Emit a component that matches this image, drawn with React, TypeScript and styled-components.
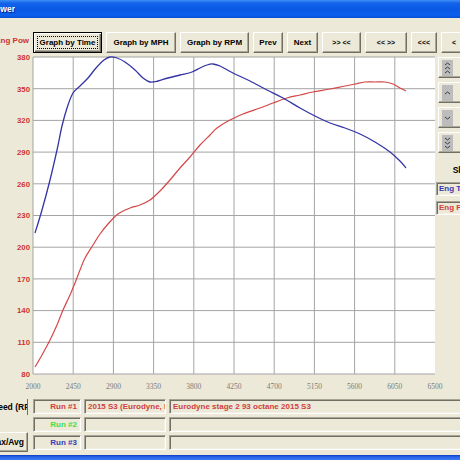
import React from 'react';
import styled, { createGlobalStyle, css } from 'styled-components';

const GlobalStyle = createGlobalStyle`
  html, body {
    margin: 0;
    padding: 0;
    background: #ece9d8;
  }
  body {
    width: 460px;
    height: 460px;
    overflow: hidden;
    font-family: "Liberation Sans", Arial, sans-serif;
  }
`;

const raised = css`
  border: 1px solid;
  border-color: #fff #716f64 #716f64 #fff;
  box-shadow: inset -1px -1px 0 #aca899;
`;

const sunken = css`
  border: 1px solid;
  border-color: #a7a597 #fff #fff #a7a597;
  box-shadow: inset 1px 1px 0 #716f64, inset -1px -1px 0 #f1efe2;
`;

const Window = styled.div`
  width: 460px;
  height: 460px;
  display: flex;
  flex-direction: column;
  overflow: hidden;
  background: #ece9d8;
`;

const TitleBar = styled.div`
  height: 18px;
  flex: none;
  display: flex;
  align-items: center;
  background: linear-gradient(180deg, #3d8df5 0%, #1262ea 18%, #0a58e4 55%, #0b5fee 85%, #0a4cd2 100%);
`;

const TitleClip = styled.div`
  width: 15px;
  overflow: hidden;
  display: flex;
  justify-content: flex-end;
`;

const TitleText = styled.span`
  color: #fff;
  font-size: 8.5px;
  font-weight: bold;
  white-space: nowrap;
  text-shadow: 1px 1px 0 #0a1e8c;
`;

const Toolbar = styled.div`
  margin-top: 14px;
  height: 21px;
  flex: none;
  display: flex;
  gap: 4px;
`;

const AxisTitle = styled.div`
  width: 29px;
  flex: none;
  overflow: hidden;
  display: flex;
  justify-content: flex-end;
  padding-top: 4px;
  color: #cc3333;
  font-size: 8px;
  font-weight: bold;
  white-space: nowrap;
`;

const Button = styled.button<{ $w: number; $small?: boolean; $focused?: boolean }>`
  position: relative;
  flex: none;
  width: ${(p) => p.$w}px;
  height: 21px;
  padding: 0;
  background: #ece9d8;
  color: #000;
  font-family: "Liberation Sans", Arial, sans-serif;
  font-size: ${(p) => (p.$small ? 7 : 8)}px;
  font-weight: bold;
  white-space: nowrap;
  ${raised}
  ${(p) =>
    p.$focused &&
    css`
      border: 1px solid #000;
      box-shadow: inset 1px 1px 0 #fff, inset -1px -1px 0 #716f64, inset -2px -2px 0 #aca899;
      &::after {
        content: '';
        position: absolute;
        inset: 3px;
        border: 1px dotted #000;
      }
    `}
`;

const Main = styled.div`
  height: 342px;
  flex: none;
  display: flex;
`;

const ChartSvg = styled.svg`
  width: 436px;
  height: 342px;
  flex: none;
  display: block;
  overflow: visible;
`;

const SideColumn = styled.div`
  width: 70px;
  flex: none;
  display: flex;
  flex-direction: column;
  padding-top: 4px;
`;

const ScrollButton = styled.div`
  width: 24px;
  height: 21px;
  margin: 0 0 4px 2px;
  box-sizing: border-box;
  display: flex;
  align-items: center;
  padding-left: 3px;
  background: #ece9d8;
  ${raised}
`;

const ShowLabel = styled.div`
  width: 56px;
  margin-top: 5px;
  height: 16px;
  line-height: 16px;
  text-align: center;
  font-size: 8.5px;
  font-weight: bold;
  color: #000;
`;

const LegendBox = styled.div<{ $color: string; $gap: number }>`
  width: 60px;
  height: 14px;
  margin-top: ${(p) => p.$gap}px;
  box-sizing: border-box;
  padding-left: 2px;
  line-height: 12px;
  font-size: 8px;
  font-weight: bold;
  white-space: nowrap;
  color: ${(p) => p.$color};
  ${sunken}
`;

const BottomPanel = styled.div`
  height: 60px;
  flex: none;
  box-sizing: border-box;
  padding: 4px 0 3px;
  display: flex;
`;

const LeftColumn = styled.div`
  width: 28px;
  flex: none;
  margin-right: 5px;
  display: flex;
  flex-direction: column;
  justify-content: space-between;
`;

const SpeedBox = styled.div`
  height: 16px;
  overflow: hidden;
  display: flex;
  justify-content: center;
  align-items: center;
  border-right: 1px solid #716f64;
  box-sizing: border-box;
  font-size: 8.5px;
  font-weight: bold;
  white-space: nowrap;
`;

const AvgButton = styled.div`
  height: 20px;
  overflow: hidden;
  display: flex;
  justify-content: flex-end;
  align-items: center;
  padding-right: 3px;
  box-sizing: border-box;
  font-size: 8.5px;
  font-weight: bold;
  white-space: nowrap;
  border-top: 1px solid #fff;
  border-right: 1px solid #716f64;
  border-bottom: 1px solid #716f64;
  box-shadow: inset -1px -1px 0 #aca899;
`;

const RunsGrid = styled.div`
  flex: 1;
  display: grid;
  grid-template-columns: 48px 82px 300px;
  grid-auto-rows: 15px;
  column-gap: 3px;
  row-gap: 3px;
`;

const Cell = styled.div<{ $color?: string; $right?: boolean }>`
  box-sizing: border-box;
  overflow: hidden;
  white-space: nowrap;
  padding: 0 3px;
  line-height: 13px;
  font-size: 8px;
  font-weight: bold;
  color: ${(p) => p.$color || '#000'};
  text-align: ${(p) => (p.$right ? 'right' : 'left')};
  ${sunken}
`;

const Taskbar = styled.div`
  height: 5px;
  flex: none;
  background: linear-gradient(180deg, #0a3ac4 0%, #2a66e8 40%, #3a7af2 100%);
`;

// chart geometry (page coordinates)
const X0 = 33;
const X1 = 435;
const Y0 = 57;
const Y1 = 374;

const torque: [number, number][] = [
  [35, 233], [42, 210], [50, 180], [57, 150], [62, 126], [67, 108], [73, 93], [80, 86],
  [88, 78], [96, 68], [104, 60], [110, 57], [117, 58], [125, 62], [135, 70], [143, 78],
  [150, 82], [158, 81], [168, 78], [180, 75], [192, 72], [200, 68], [207, 65], [213, 64],
  [220, 66], [233, 73], [250, 81], [267, 90], [283, 98], [300, 108], [315, 116], [330, 123],
  [345, 128], [360, 134], [375, 142], [390, 152], [400, 161], [406, 168],
];

const power: [number, number][] = [
  [35, 367], [42, 355], [50, 340], [57, 325], [63, 310], [70, 295], [75, 283], [80, 270],
  [85, 258], [93, 245], [100, 234], [108, 224], [118, 214], [130, 208], [140, 205], [150, 200],
  [160, 191], [170, 180], [180, 168], [190, 157], [200, 145], [210, 135], [217, 128], [230, 120],
  [243, 114], [260, 108], [273, 103], [287, 98], [300, 95], [313, 92], [330, 89], [345, 86],
  [355, 84], [365, 82], [375, 82], [385, 82], [393, 84], [400, 88], [406, 91],
];

const smoothPath = (pts: [number, number][]) => {
  let d = `M${pts[0][0]},${pts[0][1]}`;
  for (let i = 0; i < pts.length - 1; i++) {
    const p0 = pts[i - 1] || pts[i];
    const p1 = pts[i];
    const p2 = pts[i + 1];
    const p3 = pts[i + 2] || p2;
    const c1x = p1[0] + (p2[0] - p0[0]) / 6;
    const c1y = p1[1] + (p2[1] - p0[1]) / 6;
    const c2x = p2[0] - (p3[0] - p1[0]) / 6;
    const c2y = p2[1] - (p3[1] - p1[1]) / 6;
    d += ` C${c1x.toFixed(1)},${c1y.toFixed(1)} ${c2x.toFixed(1)},${c2y.toFixed(1)} ${p2[0]},${p2[1]}`;
  }
  return d;
};

const yTicks = [380, 350, 320, 290, 260, 230, 200, 170, 140, 110, 80];
const xTicks = [2000, 2450, 2900, 3350, 3800, 4250, 4700, 5150, 5600, 6050, 6500];

const Chart: React.FC = () => {
  const dx = (X1 - X0) / 10;
  const dy = (Y1 - Y0) / 10;
  return (
    <ChartSvg viewBox="0 53 436 342">
      <rect x={X0} y={Y0} width={X1 - X0} height={Y1 - Y0} fill="#fff" />
      {yTicks.map((t, j) => (
        <g key={t}>
          <line x1={X0} x2={X1} y1={Y0 + j * dy} y2={Y0 + j * dy} stroke="#a4a4a4" strokeWidth={1} />
          <text
            x={30}
            y={Y0 + j * dy + 2.8}
            textAnchor="end"
            fontFamily="Liberation Sans, Arial, sans-serif"
            fontSize={7.8}
            fontWeight="bold"
            fill="#cc3333"
          >
            {t}
          </text>
        </g>
      ))}
      {xTicks.map((t, i) => (
        <g key={t}>
          {i < 10 && (
            <line x1={X0 + i * dx} x2={X0 + i * dx} y1={Y0} y2={Y1} stroke="#a4a4a4" strokeWidth={1} />
          )}
          <text
            x={X0 + i * dx}
            y={389}
            textAnchor="middle"
            fontFamily="Liberation Serif, serif"
            fontSize={7.5}
            fill="#7c7c7c"
          >
            {t}
          </text>
        </g>
      ))}
      <path d={smoothPath(power)} fill="none" stroke="#d44848" strokeWidth={1.2} strokeLinejoin="round" />
      <path d={smoothPath(torque)} fill="none" stroke="#3434a4" strokeWidth={1.3} strokeLinejoin="round" />
    </ChartSvg>
  );
};

const ChevronIcon: React.FC<{ dir: 'up' | 'down'; count: number }> = ({ dir, count }) => {
  const start = count === 1 ? 7 : 3;
  return (
    <svg width="11" height="16" viewBox="0 0 11 16">
      <rect x="0" y="0" width="11" height="16" fill="#bcbcbc" />
      {Array.from({ length: count }).map((_, i) => {
        const y = start + i * 4;
        const pts = dir === 'up' ? `3,${y + 2} 5.5,${y} 8,${y + 2}` : `3,${y} 5.5,${y + 2} 8,${y}`;
        return <polyline key={i} points={pts} fill="none" stroke="#3a3a3a" strokeWidth={1} />;
      })}
    </svg>
  );
};

const toolbarButtons = [
  { label: 'Graph by Time', w: 69, focused: true },
  { label: 'Graph by MPH', w: 70 },
  { label: 'Graph by RPM', w: 69 },
  { label: 'Prev', w: 30 },
  { label: 'Next', w: 31 },
  { label: '>> <<', w: 39, small: true },
  { label: '<< >>', w: 42, small: true },
  { label: '<<<', w: 26, small: true },
  { label: '<', w: 26, small: true },
];

const runs = [
  { name: 'Run #1', color: '#d04040', file: '2015 S3 (Eurodyne, Et', desc: 'Eurodyne stage 2 93 octane 2015 S3' },
  { name: 'Run #2', color: '#44dd44', file: '', desc: '' },
  { name: 'Run #3', color: '#3a3ab4', file: '', desc: '' },
];

const App: React.FC = () => {
  return (
    <Window>
      <GlobalStyle />
      <TitleBar>
        <TitleClip>
          <TitleText>Dyno Viewer</TitleText>
        </TitleClip>
      </TitleBar>
      <Toolbar>
        <AxisTitle>Eng Pow</AxisTitle>
        {toolbarButtons.map((b) => (
          <Button key={b.label} $w={b.w} $small={b.small} $focused={b.focused}>
            {b.label}
          </Button>
        ))}
      </Toolbar>
      <Main>
        <Chart />
        <SideColumn>
          <ScrollButton>
            <ChevronIcon dir="up" count={3} />
          </ScrollButton>
          <ScrollButton>
            <ChevronIcon dir="up" count={1} />
          </ScrollButton>
          <ScrollButton>
            <ChevronIcon dir="down" count={1} />
          </ScrollButton>
          <ScrollButton>
            <ChevronIcon dir="down" count={3} />
          </ScrollButton>
          <ShowLabel>Show</ShowLabel>
          <LegendBox $color="#3838b0" $gap={4}>Eng Torque</LegendBox>
          <LegendBox $color="#d04040" $gap={5}>Eng Power</LegendBox>
        </SideColumn>
      </Main>
      <BottomPanel>
        <LeftColumn>
          <SpeedBox>Speed (RPM)</SpeedBox>
          <AvgButton>Min/Max/Avg</AvgButton>
        </LeftColumn>
        <RunsGrid>
          {runs.map((r) => (
            <React.Fragment key={r.name}>
              <Cell $color={r.color} $right>
                {r.name}
              </Cell>
              <Cell $color="#d04040">{r.file}</Cell>
              <Cell $color="#d04040">{r.desc}</Cell>
            </React.Fragment>
          ))}
        </RunsGrid>
      </BottomPanel>
      <Taskbar />
    </Window>
  );
};

export default App;
